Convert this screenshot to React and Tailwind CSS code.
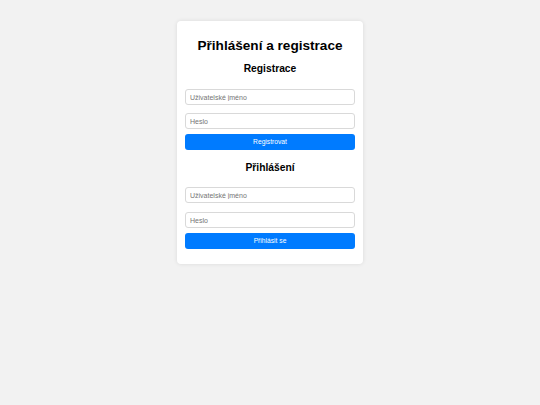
export default function App() {
  const font = { fontFamily: '"Liberation Sans", Arial, sans-serif' };
  const inputCls = "h-[16px] w-full rounded-[3px] border border-[#d9d9d9] px-[4px] text-[7px] text-[#333] placeholder:text-[#757575] outline-none";
  return (
    <div className="min-h-[405px] w-full bg-[#f2f2f2] pt-[21px]" style={font}>
      <div className="mx-auto w-[186px] rounded-[4px] bg-white px-[8px] pt-[16px] pb-[15px] shadow-[0_0_4px_rgba(0,0,0,0.1)]">
        <h1 className="whitespace-nowrap text-center text-[13.6px] font-bold leading-[17px] text-black">Přihlášení a registrace</h1>
        <h2 className="mt-[8px] text-center text-[10.3px] font-bold leading-[13px] text-black">Registrace</h2>
        <div className="mt-[14px] flex flex-col">
          <input className={inputCls} placeholder="Uživatelské jméno" />
          <input className={"mt-[8px] " + inputCls} placeholder="Heslo" />
          <button className="mt-[5px] h-[16px] w-full rounded-[3px] bg-[#007bff] text-[6.7px] text-white">Registrovat</button>
        </div>
        <h2 className="mt-[11px] text-center text-[10.3px] font-bold leading-[13px] text-black">Přihlášení</h2>
        <div className="mt-[13px] flex flex-col">
          <input className={inputCls} placeholder="Uživatelské jméno" />
          <input className={"mt-[9px] " + inputCls} placeholder="Heslo" />
          <button className="mt-[5px] h-[16px] w-full rounded-[3px] bg-[#007bff] text-[6.7px] text-white">Přihlásit se</button>
        </div>
      </div>
    </div>
  );
}
